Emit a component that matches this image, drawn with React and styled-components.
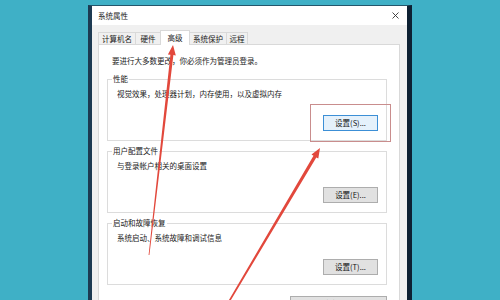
import React from "react";
import styled, { createGlobalStyle } from "styled-components";

const GlobalStyle = createGlobalStyle`
  html, body {
    margin: 0;
    padding: 0;
    background: #3fb0c6;
  }
  body {
    font-family: "Noto Sans CJK SC", "Noto Sans", sans-serif;
    color: #1a1a1a;
  }
  * {
    box-sizing: border-box;
  }
`;

const Screen = styled.div`
  position: relative;
  width: 500px;
  height: 300px;
  overflow: hidden;
  background: #3fb0c6;
  padding: 5px 0 0 88px;
`;

const Window = styled.div`
  width: 324px;
  height: 330px;
  display: flex;
  flex-direction: column;
  background: #f0f0f0;
  border-left: 4px solid #1d3a52;
  border-right: 5px solid #0e2133;
  border-top: 1px solid #24566b;
`;

const TitleBar = styled.div`
  height: 19px;
  display: flex;
  align-items: center;
  justify-content: space-between;
  padding: 0 8px 0 6px;
  background: #ffffff;
  font-size: 7.5px;
  line-height: 10px;
`;

const Body = styled.div`
  flex: 1;
  display: flex;
  flex-direction: column;
  padding: 5px 7px 0 6px;
`;

const TabStrip = styled.div`
  position: relative;
  z-index: 1;
  display: flex;
  align-items: flex-end;
  height: 14px;
`;

const Tab = styled.div`
  width: ${(p) => p.$w}px;
  height: ${(p) => (p.$active ? 15 : 12)}px;
  margin-bottom: ${(p) => (p.$active ? -1 : 0)}px;
  margin-left: -1px;
  display: flex;
  align-items: center;
  justify-content: center;
  background: ${(p) => (p.$active ? "#ffffff" : "#f0f0f0")};
  border: 1px solid #d9d9d9;
  border-bottom: none;
  font-size: 7.5px;
  line-height: 10px;
  white-space: nowrap;
  &:first-child {
    margin-left: 0;
  }
`;

const Panel = styled.div`
  flex: 1;
  background: #ffffff;
  border: 1px solid #d9d9d9;
  padding: 11px 12px 0 8px;
`;

const Intro = styled.p`
  margin: 0 0 0 5px;
  font-size: 7.5px;
  line-height: 10px;
`;

const Group = styled.fieldset`
  margin: 8px 0 0 0;
  min-width: 0;
  padding: 5px 8px 9px 8px;
  border: 1px solid #dcdcdc;
  & + & {
    margin-top: 5px;
  }
`;

const Legend = styled.legend`
  margin-left: -4px;
  padding: 0 1px;
  font-size: 7.5px;
  line-height: 10px;
`;

const Desc = styled.p`
  margin: 0 0 0 1px;
  font-size: 7.5px;
  line-height: 10px;
`;

const ButtonRow = styled.div`
  display: flex;
  justify-content: flex-end;
  margin-top: ${(p) => p.$gap}px;
`;

const Button = styled.button`
  width: ${(p) => p.$w}px;
  height: 16px;
  padding: 0;
  font-family: inherit;
  font-size: 7.5px;
  line-height: 10px;
  color: #111;
  background: ${(p) => (p.$primary ? "#e5f1fb" : "#e1e1e1")};
  border: 1px solid ${(p) => (p.$primary ? "#3c8fd6" : "#adadad")};
`;

const Highlight = styled.div`
  position: absolute;
  left: 310px;
  top: 104px;
  width: 81px;
  height: 38px;
  border: 1px solid #c98d8d;
`;

const Overlay = styled.svg`
  position: absolute;
  left: 0;
  top: 0;
  pointer-events: none;
`;

function arrowPoints(x1, y1, x2, y2, w0, w1, headLen, headW) {
  const dx = x2 - x1;
  const dy = y2 - y1;
  const len = Math.hypot(dx, dy);
  const ux = dx / len;
  const uy = dy / len;
  const nx = -uy;
  const ny = ux;
  const bx = x2 - ux * headLen;
  const by = y2 - uy * headLen;
  const pts = [
    [x1 + (nx * w0) / 2, y1 + (ny * w0) / 2],
    [bx + (nx * w1) / 2, by + (ny * w1) / 2],
    [bx + (nx * headW) / 2, by + (ny * headW) / 2],
    [x2, y2],
    [bx - (nx * headW) / 2, by - (ny * headW) / 2],
    [bx - (nx * w1) / 2, by - (ny * w1) / 2],
    [x1 - (nx * w0) / 2, y1 - (ny * w0) / 2],
  ];
  return pts.map((p) => p.map((v) => v.toFixed(1)).join(",")).join(" ");
}

const tabs = [
  { label: "计算机名", w: 38 },
  { label: "硬件", w: 26 },
  { label: "高级", w: 30, active: true },
  { label: "系统保护", w: 38 },
  { label: "远程", w: 22 },
];

const groups = [
  { title: "性能", desc: "视觉效果，处理器计划，内存使用，以及虚拟内存", btn: "设置(S)...", primary: true },
  { title: "用户配置文件", desc: "与登录帐户相关的桌面设置", btn: "设置(E)..." },
  { title: "启动和故障恢复", desc: "系统启动、系统故障和调试信息", btn: "设置(T)..." },
];

export default function App() {
  return (
    <>
      <GlobalStyle />
      <Screen>
        <Window>
          <TitleBar>
            <span>系统属性</span>
            <svg width="7" height="7" viewBox="0 0 7 7">
              <path d="M0.5 0.5 L6.5 6.5 M6.5 0.5 L0.5 6.5" stroke="#333" strokeWidth="0.9" />
            </svg>
          </TitleBar>
          <Body>
            <TabStrip>
              {tabs.map((t) => (
                <Tab key={t.label} $w={t.w} $active={t.active}>
                  {t.label}
                </Tab>
              ))}
            </TabStrip>
            <Panel>
              <Intro>要进行大多数更改，你必须作为管理员登录。</Intro>
              {groups.map((g) => (
                <Group key={g.title}>
                  <Legend>{g.title}</Legend>
                  <Desc>{g.desc}</Desc>
                  <ButtonRow $gap={16}>
                    <Button $w={55} $primary={g.primary}>
                      {g.btn}
                    </Button>
                  </ButtonRow>
                </Group>
              ))}
              <ButtonRow $gap={11}>
                <Button $w={97}>环境变量(N)...</Button>
              </ButtonRow>
            </Panel>
          </Body>
        </Window>
        <Highlight />
        <Overlay width="500" height="300" viewBox="0 0 500 300">
          <polygon points={arrowPoints(149, 255, 173, 45, 0.8, 3, 10, 8)} fill="#e2483c" />
          <polygon points={arrowPoints(224, 310, 320, 148, 1.6, 3.2, 10, 8)} fill="#e2483c" />
        </Overlay>
      </Screen>
    </>
  );
}
